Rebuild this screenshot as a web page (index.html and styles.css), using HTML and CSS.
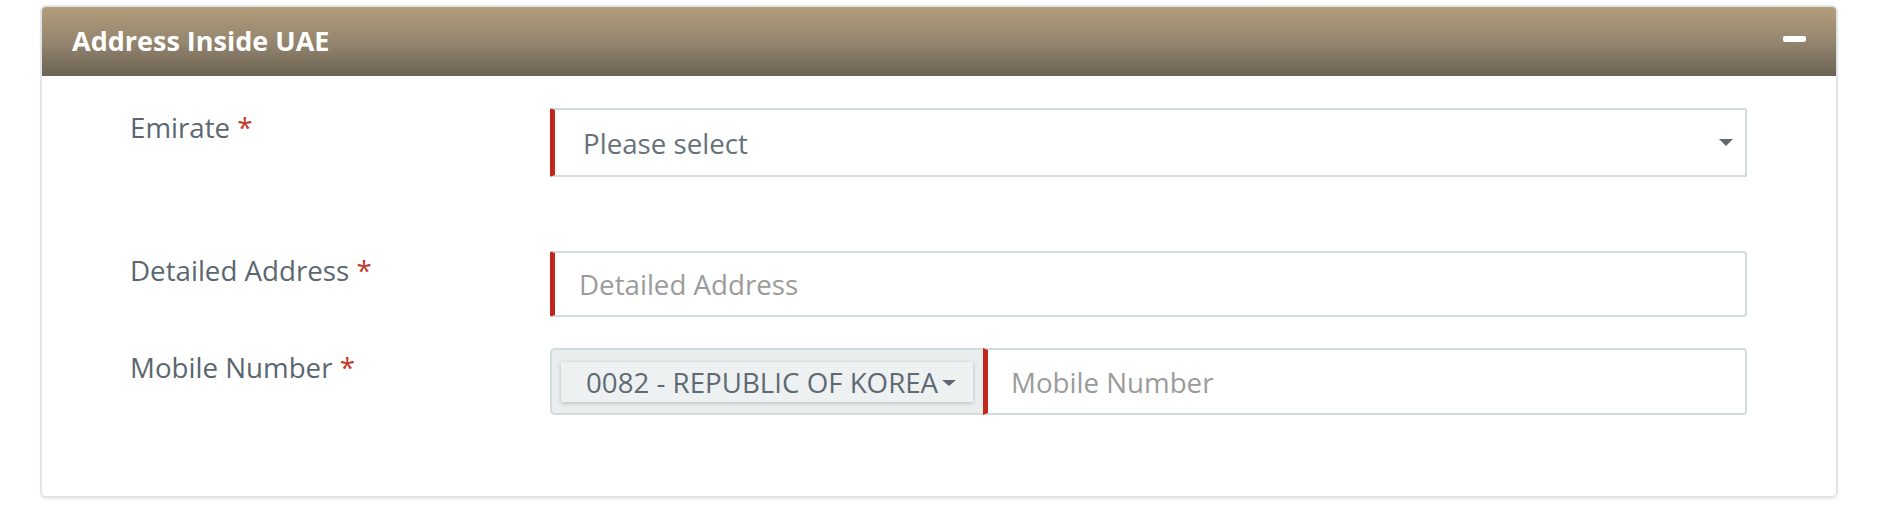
FILE: index.html
```html
<!DOCTYPE html>
<html lang="en">
<head>
<meta charset="utf-8">
<title>Address Inside UAE</title>
<link rel="stylesheet" href="styles.css">
</head>
<body>
<section class="panel">
  <header class="panel-head">
    <h2 class="panel-title">Address Inside UAE</h2>
    <span class="collapse-icon" aria-label="Collapse"></span>
  </header>
  <div class="panel-body">
    <div class="row row-emirate">
      <label class="lbl">Emirate <span class="req">*</span></label>
      <div class="select-box">
        <span class="select-text">Please select</span>
        <span class="caret"></span>
      </div>
    </div>
    <div class="row row-address">
      <label class="lbl">Detailed Address <span class="req">*</span></label>
      <div class="text-input text-address"><span class="placeholder">Detailed Address</span></div>
    </div>
    <div class="row row-mobile">
      <label class="lbl">Mobile Number <span class="req">*</span></label>
      <div class="mobile-group">
        <div class="country-wrap">
          <div class="country-btn">
            <span class="country-text">0082 - REPUBLIC OF KOREA</span>
            <span class="caret-small"></span>
          </div>
        </div>
        <div class="text-input text-mobile"><span class="placeholder">Mobile Number</span></div>
      </div>
    </div>
  </div>
</section>
</body>
</html>
```

FILE: styles.css
```css
* { box-sizing: border-box; }

body {
  margin: 0;
  padding: 5px 48px 10px 40px;
  background: #ffffff;
  font-family: "Open Sans", "DejaVu Sans", sans-serif;
}

.panel {
  width: 1798px;
  border: 2px solid #e1e5e8;
  border-radius: 6px;
  background: #fff;
  box-shadow: 0 2px 3px rgba(0, 0, 0, 0.05);
  overflow: hidden;
}

.panel-head {
  height: 69px;
  display: flex;
  align-items: center;
  justify-content: space-between;
  padding: 0 30px 0 30px;
  background: linear-gradient(to bottom, #b39d7b 0%, #958670 50%, #6b6353 100%);
}

.panel-title {
  margin: 0;
  font-size: 27px;
  font-weight: 700;
  color: #ffffff;
  line-height: 1;
  padding-bottom: 2px;
}

.collapse-icon {
  display: block;
  width: 23px;
  height: 6px;
  border-radius: 2px;
  background: #ffffff;
  margin-top: -5px;
}

.panel-body {
  padding: 32px 89px 81px 88px;
}

.row {
  display: grid;
  grid-template-columns: 420px 1fr;
  align-items: start;
}

.row-emirate { margin-bottom: 74px; }
.row-address { margin-bottom: 31px; }

.lbl {
  font-size: 27.7px;
  line-height: 38px;
  color: #5b6770;
}

.req { color: #c0392b; }

.select-box {
  height: 69px;
  display: flex;
  align-items: center;
  justify-content: space-between;
  border: 2px solid #d3dbdd;
  border-left: 5px solid #c1271c;
  border-radius: 2px;
  padding: 0 12px 0 28px;
  background: #fff;
}

.select-text {
  font-size: 27.7px;
  color: #66727b;
}

.caret {
  width: 0;
  height: 0;
  border-left: 7px solid transparent;
  border-right: 7px solid transparent;
  border-top: 7px solid #5d6870;
}

.text-input {
  display: flex;
  align-items: center;
  border: 2px solid #d3dbdd;
  border-left: 5px solid #c1271c;
  background: #fff;
}

.text-address {
  height: 66px;
  border-radius: 2px 4px 4px 2px;
  padding-left: 24px;
}

.placeholder {
  font-size: 27.7px;
  color: #9b9b9b;
}

.mobile-group {
  display: flex;
  height: 67px;
}

.country-wrap {
  width: 433px;
  height: 67px;
  display: flex;
  align-items: center;
  padding: 0 10px 0 9px;
  background: #e9edee;
  border: 2px solid #d3dbdd;
  border-right: none;
  border-radius: 5px 0 0 5px;
}

.country-btn {
  flex: 1;
  height: 40px;
  display: flex;
  align-items: center;
  padding-left: 25px;
  background: #eef1f2;
  box-shadow: 0 1px 4px rgba(0, 0, 0, 0.22);
}

.country-text {
  font-size: 27.7px;
  color: #5f6a72;
  white-space: nowrap;
}

.caret-small {
  width: 0;
  height: 0;
  margin-left: 4px;
  margin-top: 2px;
  border-left: 7px solid transparent;
  border-right: 7px solid transparent;
  border-top: 6px solid #5d6870;
}

.text-mobile {
  flex: 1;
  height: 67px;
  border-radius: 0 4px 4px 0;
  padding-left: 23px;
}
```
